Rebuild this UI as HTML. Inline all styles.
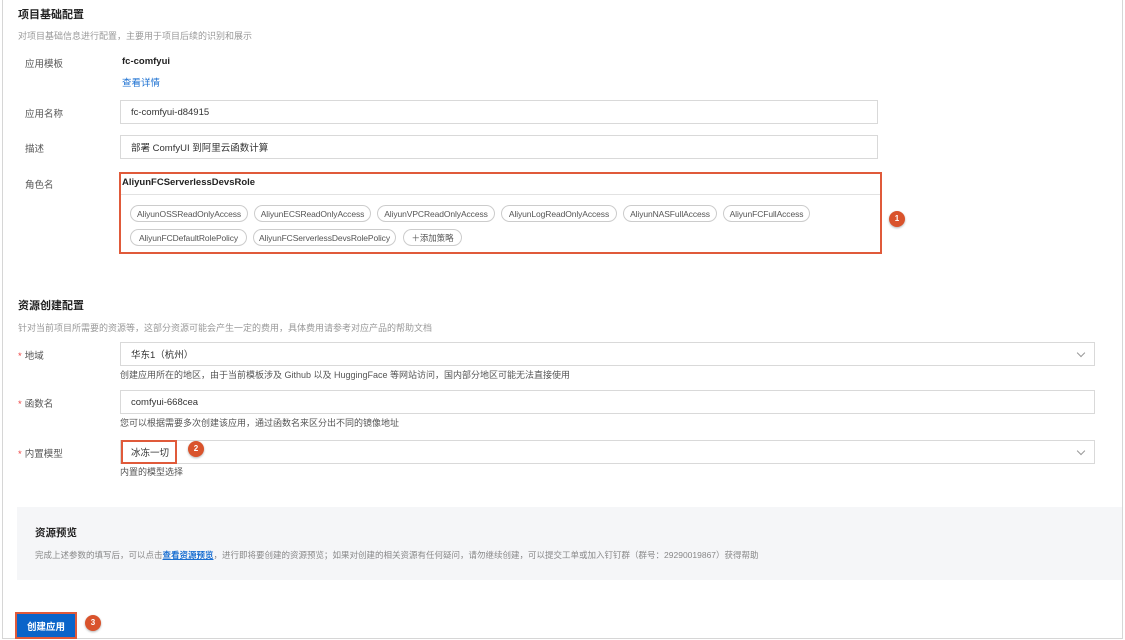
<!DOCTYPE html>
<html><head><meta charset="utf-8"><style>
*{margin:0;padding:0;box-sizing:border-box}
body{width:1125px;height:640px;background:#fff;font-family:"Liberation Sans","Noto Sans CJK SC",sans-serif;color:#333;position:relative;overflow:hidden;font-size:9.5px}
.a{position:absolute;white-space:nowrap}
.frame{position:absolute;left:2px;top:-2px;width:1121px;height:641px;border:1px solid #d6d6d6}
.h{font-size:11px;font-weight:bold;color:#222}
.s{font-size:9px;color:#999}
.l{font-size:9.5px;color:#555}
.in{position:absolute;border:1px solid #d9d9d9;background:#fff;height:24px;font-size:9.5px;color:#333;padding-left:10px;display:flex;align-items:center}
.hp{font-size:9px;color:#555}
.tag{position:absolute;height:17px;border:1px solid #ccc;border-radius:9px;font-size:8.5px;color:#555;display:flex;align-items:center;justify-content:center;letter-spacing:-0.1px}
.b{position:absolute;width:16px;height:16px;border-radius:50%;background:#d9532c;color:#fff;font-size:8px;font-weight:bold;text-align:center;line-height:16px;box-shadow:0 1px 2px rgba(0,0,0,.3)}
.st{color:#e44;margin-right:3px}
.chev{position:absolute;right:10px;top:7px;width:6px;height:6px;border-right:1px solid #999;border-bottom:1px solid #999;transform:rotate(45deg)}
</style></head><body>
<div class="frame"></div>
<div class="a h" style="left:18px;top:6px">项目基础配置</div>
<div class="a s" style="left:18px;top:29px">对项目基础信息进行配置，主要用于项目后续的识别和展示</div>
<div class="a l" style="left:25px;top:56px">应用模板</div>
<div class="a" style="left:122px;top:56px;font-weight:bold;font-size:9.5px;color:#222">fc-comfyui</div>
<div class="a" style="left:122px;top:75px;color:#1a6fd1;font-size:9.5px">查看详情</div>
<div class="a l" style="left:25px;top:106px">应用名称</div>
<div class="in" style="left:120px;top:100px;width:758px">fc-comfyui-d84915</div>
<div class="a l" style="left:25px;top:141px">描述</div>
<div class="in" style="left:120px;top:135px;width:758px">部署 ComfyUI 到阿里云函数计算</div>
<div class="a l" style="left:25px;top:177px">角色名</div>
<div style="position:absolute;left:119px;top:172px;width:763px;height:82px;border:2px solid #e05a3a"></div>
<div class="a" style="left:122px;top:177px;font-weight:bold;font-size:9.5px;color:#222">AliyunFCServerlessDevsRole</div>
<div style="position:absolute;left:121px;top:194px;width:759px;height:1px;background:#e2e2e2"></div>
<div class="tag" style="left:130px;top:205px;width:118px">AliyunOSSReadOnlyAccess</div>
<div class="tag" style="left:254px;top:205px;width:117px">AliyunECSReadOnlyAccess</div>
<div class="tag" style="left:377px;top:205px;width:118px">AliyunVPCReadOnlyAccess</div>
<div class="tag" style="left:501px;top:205px;width:116px">AliyunLogReadOnlyAccess</div>
<div class="tag" style="left:623px;top:205px;width:94px">AliyunNASFullAccess</div>
<div class="tag" style="left:723px;top:205px;width:87px">AliyunFCFullAccess</div>
<div class="tag" style="left:130px;top:229px;width:117px">AliyunFCDefaultRolePolicy</div>
<div class="tag" style="left:253px;top:229px;width:143px">AliyunFCServerlessDevsRolePolicy</div>
<div class="tag" style="left:403px;top:229px;width:59px">＋添加策略</div>
<div class="b" style="left:889px;top:211px">1</div>

<div class="a h" style="left:18px;top:297px">资源创建配置</div>
<div class="a s" style="left:18px;top:321px">针对当前项目所需要的资源等，这部分资源可能会产生一定的费用，具体费用请参考对应产品的帮助文档</div>
<div class="a l" style="left:18px;top:348px"><span class="st">*</span>地域</div>
<div class="in" style="left:120px;top:342px;width:975px">华东1（杭州）<div class="chev"></div></div>
<div class="a hp" style="left:120px;top:368px">创建应用所在的地区，由于当前模板涉及 Github 以及 HuggingFace 等网站访问，国内部分地区可能无法直接使用</div>
<div class="a l" style="left:18px;top:396px"><span class="st">*</span>函数名</div>
<div class="in" style="left:120px;top:390px;width:975px">comfyui-668cea</div>
<div class="a hp" style="left:120px;top:416px">您可以根据需要多次创建该应用，通过函数名来区分出不同的镜像地址</div>
<div class="a l" style="left:18px;top:446px"><span class="st">*</span>内置模型</div>
<div class="in" style="left:120px;top:440px;width:975px">冰冻一切<div class="chev"></div></div>
<div style="position:absolute;left:121px;top:440px;width:56px;height:24px;border:2px solid #e05a3a"></div>
<div class="b" style="left:188px;top:441px">2</div>
<div class="a hp" style="left:120px;top:465px">内置的模型选择</div>

<div style="position:absolute;left:17px;top:507px;width:1105px;height:73px;background:#f5f6f8"></div>
<div class="a" style="left:35px;top:525px;font-size:10.5px;font-weight:bold;color:#222">资源预览</div>
<div class="a" style="left:35px;top:549px;font-size:8.5px;color:#888">完成上述参数的填写后，可以点击<span style="color:#1a6fd1;font-weight:bold;text-decoration:underline">查看资源预览</span>，进行即将要创建的资源预览；如果对创建的相关资源有任何疑问，请勿继续创建，可以提交工单或加入钉钉群（群号：29290019867）获得帮助</div>

<div style="position:absolute;left:15px;top:612px;width:62px;height:27px;background:#0a64c9;border:2px solid #e05a3a;color:#fff;font-size:9.5px;font-weight:bold;display:flex;align-items:center;justify-content:center">创建应用</div>
<div class="b" style="left:85px;top:615px">3</div>
</body></html>
